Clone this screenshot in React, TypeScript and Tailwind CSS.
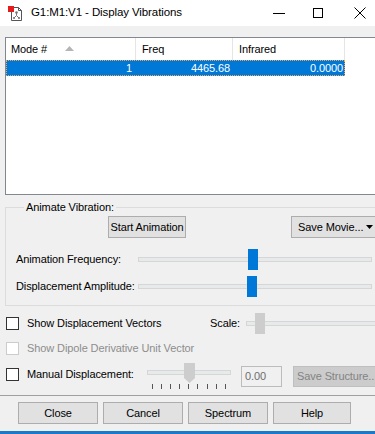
import React from 'react';

const font = "font-['Liberation_Sans',Arial,sans-serif]";

function TitleIcon() {
  return (
    <svg width="16" height="16" viewBox="0 0 16 16" className="shrink-0">
      <path d="M3.5 1.5h7l3 3v10h-10z" fill="#fff" stroke="#555" />
      <path d="M10.5 1.5v3h3" fill="none" stroke="#555" />
      <circle cx="8.5" cy="6.5" r="1.3" fill="#777" />
      <path d="M8.5 6.5v3M8.5 9.5l-2.5 2.5M8.5 9.5l2.5 2.5" stroke="#777" strokeWidth="1" />
      <circle cx="6" cy="12" r="1.1" fill="#777" />
      <circle cx="11" cy="12" r="1.1" fill="#777" />
      <rect x="0" y="0" width="6" height="6" fill="#e31b1b" />
    </svg>
  );
}

function Btn({ children, className = '' }: { children: React.ReactNode; className?: string }) {
  return (
    <button className={`h-[22px] shrink-0 bg-[#e1e1e1] border border-[#adadad] text-[#000] leading-none whitespace-nowrap ${className}`}>
      {children}
    </button>
  );
}

function Track({ thumb, className = '' }: { thumb: number; className?: string }) {
  return (
    <div className={`relative shrink-0 h-[5px] bg-[#e7eaea] border border-[#d6d6d6] ${className}`}>
      <div className="absolute top-[-9px] w-[10px] h-[21px] bg-[#0078d7]" style={{ left: thumb }} />
    </div>
  );
}

function Check({ disabled = false }: { disabled?: boolean }) {
  return (
    <span
      className={`w-[13px] h-[13px] shrink-0 bg-white border ${disabled ? 'border-[#cccccc]' : 'border-[#333333]'}`}
    />
  );
}

export default function App() {
  return (
    <div className={`w-[375px] h-[434px] overflow-hidden bg-[#f0f0f0] flex flex-col text-[11px] tracking-[-0.1px] text-black whitespace-nowrap ${font}`}>
      {/* title bar */}
      <div className="h-[26px] bg-white flex items-center shrink-0">
        <div className="ml-[8px] mt-[1px]">
          <TitleIcon />
        </div>
        <span className="ml-[7px] text-[11.5px] text-[#000]">G1:M1:V1 - Display Vibrations</span>
        <div className="ml-auto flex items-center">
          <span className="w-[12px] h-[1px] bg-black mr-[28px]" />
          <span className="w-[10px] h-[10px] border border-black mr-[31px]" />
          <svg width="12" height="12" viewBox="0 0 12 12" className="mr-[9px]">
            <path d="M0.5 0.5l11 11M11.5 0.5l-11 11" stroke="#000" strokeWidth="1" />
          </svg>
        </div>
      </div>

      <div className="pl-[5px] pt-[11px] flex flex-col">
        {/* list view */}
        <div className="h-[158px] w-[390px] shrink-0 border border-[#828790] bg-white">
          <div className="flex h-[22px]">
            <div className="w-[130px] border-r border-[#e5e5e5] flex items-center pl-[5px]">
              Mode #
              <svg width="9" height="5" viewBox="0 0 9 5" className="ml-[18px] mb-[2px]">
                <path d="M0 5L4.5 0L9 5z" fill="#b5b5b5" />
              </svg>
            </div>
            <div className="w-[97px] border-r border-[#e5e5e5] flex items-center pl-[6px]">Freq</div>
            <div className="w-[112px] border-r border-[#e5e5e5] flex items-center pl-[6px]">Infrared</div>
          </div>
          <div className="flex h-[16px] w-[339px] bg-[#0078d7] text-white outline-1 outline-dotted outline-[#f7a64a] -outline-offset-1 items-center">
            <div className="w-[130px] text-right pr-[4px]">1</div>
            <div className="w-[97px] text-right pr-[3px]">4465.68</div>
            <div className="w-[112px] text-right pr-[2px]">0.0000</div>
          </div>
        </div>

        {/* animate group */}
        <fieldset className="mt-[5px] w-[390px] h-[106px] border border-[#dcdcdc] pl-[10px]">
          <legend className="ml-[8px] px-[2px] leading-[15px]">Animate Vibration:</legend>
          <div className="flex mt-[1px]">
            <Btn className="ml-[92px] w-[78px]">Start Animation</Btn>
            <Btn className="ml-[105px] w-[90px] text-left pl-[6px] flex items-center">
              Save Movie...
              <svg width="7" height="4" viewBox="0 0 7 4" className="ml-[3px]">
                <path d="M0 0h7L3.5 4z" fill="#000" />
              </svg>
            </Btn>
          </div>
          <div className="flex items-center mt-[10px] h-[22px]">
            <span className="w-[122px] shrink-0">Animation Frequency:</span>
            <Track thumb={109} className="w-[234px]" />
          </div>
          <div className="flex items-center mt-[5px] h-[22px]">
            <span className="w-[122px] shrink-0">Displacement Amplitude:</span>
            <Track thumb={108} className="w-[234px]" />
          </div>
        </fieldset>

        {/* options */}
        <div className="flex items-center h-[22px] mt-[6px] pl-[1px]">
          <Check />
          <span className="ml-[8px] w-[183px] shrink-0">Show Displacement Vectors</span>
          <span className="shrink-0">Scale:</span>
          <div className="relative shrink-0 ml-[6px] w-[140px] h-[5px] bg-[#e7eaea] border border-[#d6d6d6]">
            <div className="absolute top-[-9px] left-[8px] w-[10px] h-[21px] bg-[#cdcdcd]" />
          </div>
        </div>
        <div className="flex items-center h-[13px] mt-[8px] pl-[1px]">
          <Check disabled />
          <span className="ml-[8px] text-[#8d8d8d]">Show Dipole Derivative Unit Vector</span>
        </div>

        <div className="flex items-start mt-[8px] pl-[1px] h-[24px]">
          <div className="flex items-center h-[21px] mt-[1px] shrink-0">
            <Check />
            <span className="ml-[8px] w-[120px]">Manual Displacement:</span>
          </div>
          <div className="relative shrink-0 w-[86px] h-[26px]">
            <div className="absolute left-0 top-[7px] w-[84px] h-[5px] bg-[#e7eaea] border border-[#d6d6d6]" />
            <svg width="11" height="20" viewBox="0 0 11 20" className="absolute left-[37px] top-0">
              <path d="M0 0h11v15l-5.5 5l-5.5-5z" fill="#cdcdcd" />
            </svg>
            <div className="absolute left-[5px] top-[21px] flex gap-[8.1px]">
              {Array.from({ length: 9 }).map((_, i) => (
                <span key={i} className="w-[1px] h-[5px] bg-[#555]" />
              ))}
            </div>
          </div>
          <div className="shrink-0 ml-[8px] mt-[3px] w-[41px] h-[21px] border border-[#bcbcbc] bg-[#f0f0f0] text-[#6d6d6d] pl-[3px] flex items-center">
            0.00
          </div>
          <div className="shrink-0 ml-[11px] mt-[3px] w-[90px] h-[21px] bg-[#cccccc] border border-[#bfbfbf] text-[#838383] flex items-center pl-[3px]">
            Save Structure...
          </div>
        </div>
      </div>

      <div className="h-[1px] bg-[#a0a0a0] mt-[8px]" />
      <div className="flex gap-[5px] pl-[18px] mt-[6px]">
        <Btn className="w-[80px]">Close</Btn>
        <Btn className="w-[80px]">Cancel</Btn>
        <Btn className="w-[80px]">Spectrum</Btn>
        <Btn className="w-[78px]">Help</Btn>
      </div>
      <div className="mt-auto h-[3px] bg-[#1979ca]" />
    </div>
  );
}
